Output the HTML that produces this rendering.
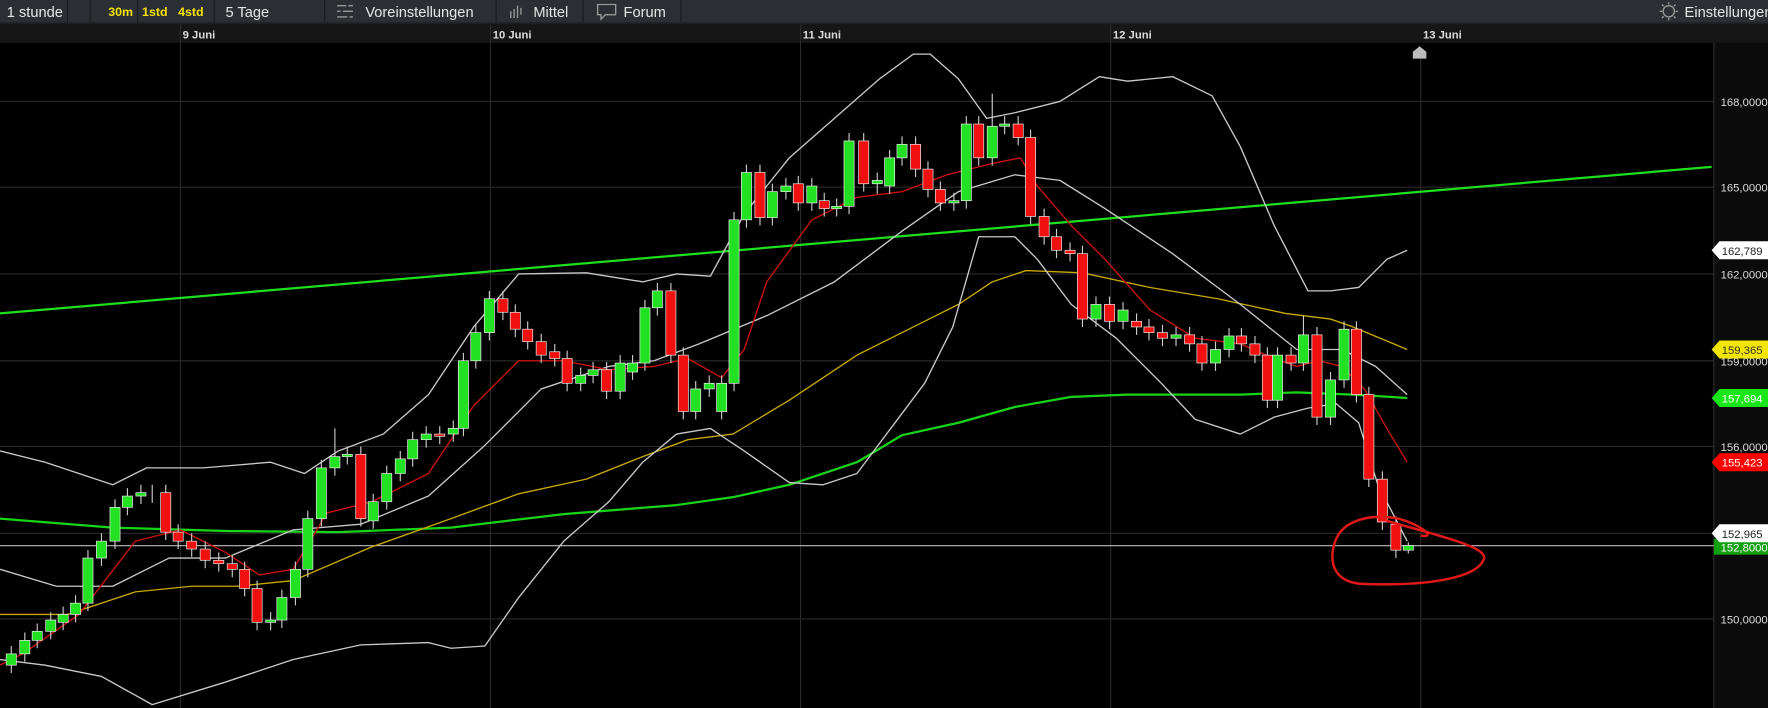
<!DOCTYPE html>
<html><head><meta charset="utf-8"><style>
html,body{margin:0;padding:0;background:#000;overflow:hidden}
svg{display:block}
text{font-family:"Liberation Sans",sans-serif}
</style></head><body>
<svg width="1768" height="708" viewBox="0 0 1568 628" preserveAspectRatio="none" xmlns="http://www.w3.org/2000/svg">
<rect width="1568" height="628" fill="#000"/>
<rect x="0" y="0" width="1568" height="20" fill="#2b2e32"/>
<rect x="0" y="20" width="1568" height="2" fill="#1d1f22"/>
<g fill="#e6e6e6" font-size="13">
<text x="6" y="15">1 stunde</text>
<text x="200" y="15">5 Tage</text>
<text x="324" y="15">Voreinstellungen</text>
<text x="473" y="15">Mittel</text>
<text x="553" y="15">Forum</text>
<text x="1494" y="15">Einstellungen</text>
</g>
<g fill="#f5e400" font-size="11" font-weight="bold">
<text x="96" y="14">30m</text><text x="126" y="14">1std</text><text x="158" y="14">4std</text>
</g>
<g stroke="#1a1c1e" stroke-width="1">
<line x1="60" y1="0" x2="60" y2="20"/><line x1="80" y1="0" x2="80" y2="20"/><line x1="122" y1="0" x2="122" y2="20"/><line x1="190" y1="0" x2="190" y2="20"/>
<line x1="288" y1="0" x2="288" y2="20"/><line x1="440" y1="0" x2="440" y2="20"/><line x1="517" y1="0" x2="517" y2="20"/><line x1="604" y1="0" x2="604" y2="20"/>
</g>
<g stroke="#999" stroke-width="1.2" fill="none">
<path d="M299 5h8M309 5h4M299 10h3M304 10h9M299 15h9M310 15h3"/>
<path d="M453 10v6M456 8v8M459 5v11M462 7v6"/>
<path d="M530 4h16v9h-9l-4 4v-4h-3z"/>
<circle cx="1480" cy="10" r="5"/><path d="M1480 2v2M1480 16v2M1472 10h2M1486 10h2M1474 4l1.5 1.5M1486 4l-1.5 1.5M1474 16l1.5-1.5M1486 16l-1.5-1.5"/>
</g>
<rect x="0" y="22" width="1568" height="16" fill="#161616"/>
<g fill="#ddd" font-size="10" font-weight="bold">
<text x="162" y="34">9 Juni</text><text x="437" y="34">10 Juni</text><text x="712" y="34">11 Juni</text><text x="987" y="34">12 Juni</text><text x="1262" y="34">13 Juni</text>
</g>
<path d="M1253 52v-6l6-5 6 5v6z" fill="#bbb"/>
<g stroke="#2a2a2a" stroke-width="1">
<line x1="160" y1="22" x2="160" y2="628"/><line x1="435" y1="22" x2="435" y2="628"/><line x1="710" y1="22" x2="710" y2="628"/><line x1="985" y1="22" x2="985" y2="628"/><line x1="1260" y1="52" x2="1260" y2="628"/>
<line x1="0" y1="90" x2="1520" y2="90"/><line x1="0" y1="166" x2="1520" y2="166"/><line x1="0" y1="243" x2="1520" y2="243"/><line x1="0" y1="320" x2="1520" y2="320"/><line x1="0" y1="396" x2="1520" y2="396"/><line x1="0" y1="473" x2="1520" y2="473"/><line x1="0" y1="549" x2="1520" y2="549"/>
</g>
<rect x="1520" y="38" width="48" height="590" fill="#0b0b0b"/>
<line x1="1520" y1="38" x2="1520" y2="628" stroke="#2e2e2e"/>
<g fill="#ddd" font-size="10">
<text x="1526" y="94">168,0000</text><text x="1526" y="170">165,0000</text><text x="1526" y="247">162,0000</text><text x="1526" y="324">159,0000</text><text x="1526" y="400">156,0000</text><text x="1526" y="553">150,0000</text>
</g>
<g font-size="10">
<path d="M1518 222l7-8h43v16h-43z" fill="#fff"/><text x="1527" y="226" fill="#222">162,789</text>
<path d="M1518 310l7-8h43v16h-43z" fill="#f2e600"/><text x="1527" y="314" fill="#333">159,365</text>
<path d="M1518 353l7-8h43v16h-43z" fill="#19e619"/><text x="1527" y="357" fill="#fff">157,694</text>
<path d="M1518 410l7-8h43v16h-43z" fill="#f00"/><text x="1527" y="414" fill="#fff">155,423</text>
<rect x="1520" y="478" width="48" height="14" fill="#12a012"/><text x="1526" y="489" fill="#fff">152,8000</text>
<path d="M1518 473l7-8h43v16h-43z" fill="#fff"/><text x="1527" y="477" fill="#222">152,965</text>
</g>
<line x1="0" y1="484" x2="1520" y2="484" stroke="#bbb" stroke-width="1"/>
<line x1="0" y1="278" x2="1518" y2="148" stroke="#1ee01e" stroke-width="2"/>
<g fill="none" stroke-linejoin="round">
<polyline stroke="#18d418" stroke-width="2" points="0,460 100,468 200,471 300,472 400,468 500,456 600,448 650,441 700,430 760,410 800,386 850,375 900,361 950,352 1000,350 1100,350 1150,348 1200,350 1248,353"/>
<polyline stroke="#c8a800" stroke-width="1.2" points="0,545 60,545 120,525 170,520 210,520 260,515 330,485 400,460 460,438 520,425 570,405 610,390 650,385 700,355 760,315 820,285 850,270 880,250 910,240 960,242 1020,255 1080,265 1140,278 1180,283 1200,290 1248,310"/>
<polyline stroke="#c8c8c8" stroke-width="1.2" points="0,505 50,520 100,520 150,495 200,495 260,470 320,465 380,440 430,395 480,345 540,325 580,320 620,305 680,280 740,250 800,205 850,170 900,155 940,160 980,185 1040,225 1100,270 1150,310 1190,310 1220,325 1248,350"/>
<polyline stroke="#c8c8c8" stroke-width="1.2" points="0,400 40,410 100,430 130,415 180,415 240,410 270,420 300,400 340,385 380,350 420,290 460,243 520,242 570,250 600,243 630,245 660,190 700,140 740,105 780,70 810,48 825,48 850,70 875,105 900,100 940,90 975,68 1000,72 1040,68 1075,85 1100,130 1130,200 1160,258 1180,258 1205,255 1230,230 1248,222"/>
<polyline stroke="#c8c8c8" stroke-width="1.2" points="0,585 40,590 90,600 135,625 200,605 260,585 320,572 380,570 400,575 430,573 460,530 500,480 540,445 570,410 600,385 630,380 660,400 700,428 730,430 760,420 790,380 820,340 845,290 868,210 900,210 920,230 950,270 990,300 1030,340 1060,372 1100,385 1130,370 1160,362 1185,358 1205,375 1222,430 1248,480"/>
<polyline stroke="#cc1010" stroke-width="1.2" points="0,590 20,580 70,545 120,480 160,470 200,490 230,510 260,505 290,455 330,445 380,420 420,360 460,320 500,320 540,328 580,325 610,318 640,335 660,310 680,250 720,195 760,175 800,170 840,155 880,145 905,140 920,165 950,200 980,230 1020,275 1060,300 1100,305 1130,318 1150,325 1170,320 1190,325 1210,345 1230,380 1248,410"/>
</g>
<!-- wicks -->
<path stroke="#ccc" stroke-width="1" fill="none" d="M10 573V597M22 561V587M33 553V575M45 543V567M56 538V559M67 528V552M78 488V542M90 473V502M102 443V487M113 433V457M125 430V447M135 430V446M147 430V479M158 465V487M170 473V494M182 480V504M194 490V507M206 493V512M217 498V529M228 515V559M240 543V559M250 523V557M262 498V537M273 453V512M285 408V467M297 380V422M308 396V412M320 396V467M331 438V469M343 413V452M355 400V427M366 383V414M378 378V397M390 378V394M402 373V392M411 313V387M422 288V327M434 258V302M446 258V284M457 270V299M468 285V310M480 296V322M492 305V325M503 311V347M515 326V347M526 321V340M538 321V354M550 315V354M561 315V337M572 266V329M583 251V280M595 251V322M606 308V372M617 338V372M629 333V352M640 333V372M651 188V347M662 146V202M674 146V200M685 163V200M697 158V177M708 156V187M720 158V187M731 171V192M742 176V192M753 118V190M766 118V170M778 153V172M789 133V172M800 121V147M812 121V157M823 143V175M834 161V187M846 171V187M857 103V185M868 103V147M880 83V147M891 103V119M903 103V129M914 115V199M926 185V217M937 203V229M949 215V232M960 218V290M972 263V290M984 263V292M996 268V292M1008 278V297M1019 283V302M1031 288V307M1043 290V307M1055 290V312M1066 298V329M1078 303V329M1090 291V317M1101 291V312M1113 298V322M1124 308V362M1133 308V362M1145 308V329M1156 280V329M1168 290V377M1180 330V377M1192 285V344M1203 285V357M1214 343V432M1226 418V470M1238 458V495M1249 481V491"/>
<!-- green bodies -->
<g fill="#22e022" stroke="#eee" stroke-width="0.6">
<rect x="5.5" y="580" width="9" height="10"/><rect x="17.5" y="568" width="9" height="12"/><rect x="28.5" y="560" width="9" height="8"/><rect x="40.5" y="550" width="9" height="10"/><rect x="51.5" y="545" width="9" height="7"/><rect x="62.5" y="535" width="9" height="10"/><rect x="73.5" y="495" width="9" height="40"/><rect x="85.5" y="480" width="9" height="15"/><rect x="97.5" y="450" width="9" height="30"/><rect x="108.5" y="440" width="9" height="10"/><rect x="120.5" y="437" width="9" height="3"/>
<rect x="235.5" y="550" width="9" height="2"/><rect x="245.5" y="530" width="9" height="20"/><rect x="257.5" y="505" width="9" height="25"/><rect x="268.5" y="460" width="9" height="45"/><rect x="280.5" y="415" width="9" height="45"/><rect x="292.5" y="405" width="9" height="10"/><rect x="303.5" y="403" width="9" height="2"/>
<rect x="326.5" y="445" width="9" height="17"/><rect x="338.5" y="420" width="9" height="25"/><rect x="350.5" y="407" width="9" height="13"/><rect x="361.5" y="390" width="9" height="17"/><rect x="373.5" y="385" width="9" height="5"/><rect x="397.5" y="380" width="9" height="5"/><rect x="406.5" y="320" width="9" height="60"/><rect x="417.5" y="295" width="9" height="25"/><rect x="429.5" y="265" width="9" height="30"/>
<rect x="510.5" y="333" width="9" height="7"/><rect x="521.5" y="328" width="9" height="5"/><rect x="545.5" y="322" width="9" height="25"/><rect x="556.5" y="322" width="9" height="8"/><rect x="567.5" y="273" width="9" height="49"/><rect x="578.5" y="258" width="9" height="15"/>
<rect x="612.5" y="345" width="9" height="20"/><rect x="624.5" y="340" width="9" height="5"/><rect x="635.5" y="340" width="9" height="25"/><rect x="646.5" y="195" width="9" height="145"/><rect x="657.5" y="153" width="9" height="42"/>
<rect x="680.5" y="170" width="9" height="23"/><rect x="692.5" y="165" width="9" height="5"/><rect x="715.5" y="165" width="9" height="15"/><rect x="737.5" y="183" width="9" height="2"/><rect x="748.5" y="125" width="9" height="58"/><rect x="773.5" y="160" width="9" height="3"/><rect x="784.5" y="140" width="9" height="25"/><rect x="795.5" y="128" width="9" height="12"/>
<rect x="841.5" y="178" width="9" height="2"/><rect x="852.5" y="110" width="9" height="68"/><rect x="875.5" y="112" width="9" height="28"/><rect x="886.5" y="110" width="9" height="2"/>
<rect x="967.5" y="270" width="9" height="13"/><rect x="991.5" y="275" width="9" height="10"/><rect x="1038.5" y="297" width="9" height="3"/><rect x="1073.5" y="310" width="9" height="12"/><rect x="1085.5" y="298" width="9" height="12"/><rect x="1128.5" y="315" width="9" height="40"/><rect x="1151.5" y="297" width="9" height="25"/><rect x="1175.5" y="337" width="9" height="33"/><rect x="1187.5" y="292" width="9" height="45"/><rect x="1244.5" y="484" width="9" height="4"/>
</g>
<!-- red bodies -->
<g fill="#f01010" stroke="#eee" stroke-width="0.6">
<rect x="142.5" y="437" width="9" height="35"/><rect x="153.5" y="472" width="9" height="8"/><rect x="165.5" y="480" width="9" height="7"/><rect x="177.5" y="487" width="9" height="10"/><rect x="189.5" y="497" width="9" height="3"/><rect x="201.5" y="500" width="9" height="5"/><rect x="212.5" y="505" width="9" height="17"/><rect x="223.5" y="522" width="9" height="30"/>
<rect x="315.5" y="403" width="9" height="57"/><rect x="385.5" y="385" width="9" height="2"/>
<rect x="441.5" y="265" width="9" height="12"/><rect x="452.5" y="277" width="9" height="15"/><rect x="463.5" y="292" width="9" height="11"/><rect x="475.5" y="303" width="9" height="12"/><rect x="487.5" y="312" width="9" height="6"/><rect x="498.5" y="318" width="9" height="22"/><rect x="533.5" y="328" width="9" height="19"/>
<rect x="590.5" y="258" width="9" height="57"/><rect x="601.5" y="315" width="9" height="50"/><rect x="669.5" y="153" width="9" height="40"/><rect x="703.5" y="163" width="9" height="17"/><rect x="726.5" y="178" width="9" height="7"/><rect x="761.5" y="125" width="9" height="38"/>
<rect x="807.5" y="128" width="9" height="22"/><rect x="818.5" y="150" width="9" height="18"/><rect x="829.5" y="168" width="9" height="12"/><rect x="863.5" y="110" width="9" height="30"/><rect x="898.5" y="110" width="9" height="12"/><rect x="909.5" y="122" width="9" height="70"/><rect x="921.5" y="192" width="9" height="18"/><rect x="932.5" y="210" width="9" height="12"/><rect x="944.5" y="222" width="9" height="3"/><rect x="955.5" y="225" width="9" height="58"/>
<rect x="979.5" y="270" width="9" height="15"/><rect x="1003.5" y="285" width="9" height="5"/><rect x="1014.5" y="290" width="9" height="5"/><rect x="1026.5" y="295" width="9" height="5"/><rect x="1050.5" y="297" width="9" height="8"/><rect x="1061.5" y="305" width="9" height="17"/><rect x="1096.5" y="298" width="9" height="7"/><rect x="1108.5" y="305" width="9" height="10"/><rect x="1119.5" y="315" width="9" height="40"/><rect x="1140.5" y="315" width="9" height="7"/>
<rect x="1163.5" y="297" width="9" height="73"/><rect x="1198.5" y="292" width="9" height="58"/><rect x="1209.5" y="350" width="9" height="75"/><rect x="1221.5" y="425" width="9" height="38"/><rect x="1233.5" y="465" width="9" height="23"/>
</g>
<path d="M1230 462 C1275 475 1320 485 1316 496 C1310 512 1270 520 1210 518 C1180 517 1178 495 1185 478 C1192 462 1215 455 1240 460 C1260 465 1275 478 1260 475" fill="none" stroke="#e01818" stroke-width="2.2"/>
</svg>
</body></html>
